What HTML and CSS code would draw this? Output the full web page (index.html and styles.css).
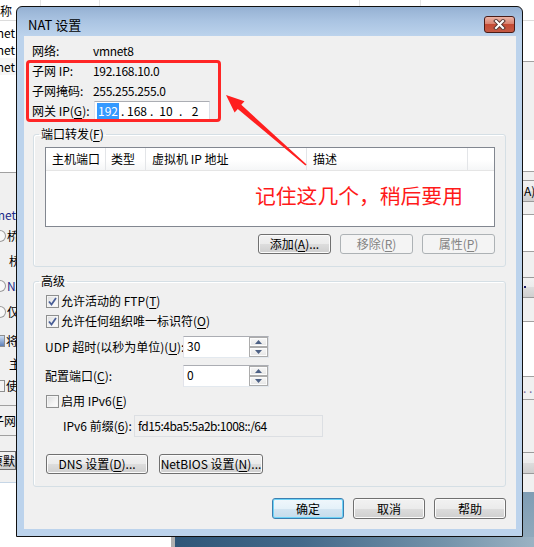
FILE: index.html
```html
<!DOCTYPE html>
<html lang="zh-CN">
<head>
<meta charset="utf-8">
<title>NAT 设置</title>
<link rel="stylesheet" href="styles.css">
</head>
<body>
<div class="desktop">
  <div class="bg-header">
    <span class="bh-cell bh-c1">称</span>
    <span class="bh-cell bh-c2"></span>
    <span class="bh-cell bh-c3"></span>
    <span class="bh-cell bh-c4"></span>
    <span class="bh-cell bh-c5"></span>
  </div>
  <div class="bg-main">
    <div class="bg-left">
      <div class="l-list">
        <div class="l-item">vmnet</div>
        <div class="l-item">vmnet</div>
        <div class="l-item l-item-sel">vmnet</div>
      </div>
      <div class="l-panel">
        <div class="l-row l-h32"></div>
        <div class="l-row l-h20 l-end l-blue">Vmnet</div>
        <div class="l-row l-h22"><span class="l-radio"></span><span>桥</span></div>
        <div class="l-row l-h28 l-ind">桥</div>
        <div class="l-row l-h22"><span class="l-radio"></span><span class="l-blue">NAT</span></div>
        <div class="l-row l-h30"><span class="l-radio"></span><span>仅</span></div>
        <div class="l-row l-h28"><span class="l-check"></span><span>将</span></div>
        <div class="l-row l-h18 l-ind">主</div>
        <div class="l-row l-h26"><span class="l-check l-check-off"></span><span>使</span></div>
        <div class="l-row l-h7 l-line"></div>
        <div class="l-row l-h30 l-line l-end">子网</div>
        <div class="l-row l-h13"></div>
        <div class="l-row l-h23"><span class="l-btn">还原默</span></div>
        <div class="l-row l-h10"></div>
      </div>
      <div class="l-white"></div>
    </div>
    <div class="bg-right">
      <div class="r-blk r-h41 r-white r-line"></div>
      <div class="r-blk r-h78 r-gray"></div>
      <div class="r-blk r-h32 r-white r-line"></div>
      <div class="r-blk r-h8 r-gray"></div>
      <div class="r-blk r-h22 r-btn">A)...</div>
      <div class="r-blk r-h13 r-gray r-line"></div>
      <div class="r-blk r-h37 r-white r-line"></div>
      <div class="r-blk r-h25 r-gray"></div>
      <div class="r-blk r-h21 r-btn"><span class="r-dot"></span></div>
      <div class="r-blk r-h24 r-gray r-line"></div>
      <div class="r-blk r-h55 r-white r-line"></div>
      <div class="r-blk r-h23 r-gray r-line r-dots">. .</div>
      <div class="r-blk r-h52 r-gray"></div>
      <div class="r-blk r-h22 r-btn"></div>
      <div class="r-blk r-h18 r-gray"></div>
      <div class="r-blk r-desk"></div>
    </div>
  </div>
  <div class="bg-bottom">
    <div class="bb-white"></div>
    <div class="bb-desk"></div>
  </div>
</div>

<div class="dialog">
  <div class="titlebar">
    <span class="title">NAT 设置</span>
    <span class="close">
      <svg width="13" height="11" viewBox="0 0 13 11">
        <path d="M3 2 L10 9 M10 2 L3 9" stroke="#5b3a36" stroke-width="4" stroke-linecap="square" fill="none"/>
        <path d="M3 2 L10 9 M10 2 L3 9" stroke="#ffffff" stroke-width="2" stroke-linecap="square" fill="none"/>
      </svg>
    </span>
  </div>
  <div class="client">
    <div class="info">
      <span class="lbl">网络:</span><span class="val">vmnet8</span>
      <span class="lbl">子网 IP:</span><span class="val">192.168.10.0</span>
      <span class="lbl">子网掩码:</span><span class="val">255.255.255.0</span>
      <span class="lbl">网关 IP(<u>G</u>):</span>
      <div class="ipbox">
        <span class="ipf"><span class="sel">192</span></span><span class="ipdot">.</span>
        <span class="ipf">168</span><span class="ipdot">.</span>
        <span class="ipf">10</span><span class="ipdot">.</span>
        <span class="ipf">2</span>
      </div>
      <div class="redbox"></div>
    </div>

    <fieldset class="group g1">
      <legend>端口转发(<u>F</u>)</legend>
      <div class="listview">
        <div class="lv-head">
          <span class="lv-col lv-c1">主机端口</span>
          <span class="lv-col lv-c2">类型</span>
          <span class="lv-col lv-c3">虚拟机 IP 地址</span>
          <span class="lv-col lv-c4">描述</span>
          <span class="lv-col lv-c5"></span>
        </div>
        <div class="note">记住这几个，稍后要用</div>
      </div>
      <div class="btnrow">
        <button class="btn btn-73">添加(<u>A</u>)...</button>
        <button class="btn btn-73" disabled>移除(<u>R</u>)</button>
        <button class="btn btn-73" disabled>属性(<u>P</u>)</button>
      </div>
    </fieldset>

    <fieldset class="group g2">
      <legend>高级</legend>
      <div class="cb-row cb-first">
        <span class="cb"><svg width="11" height="11" viewBox="0 0 11 11"><path d="M2 5.5 L4.5 8.5 L9 2" stroke="#4a5f97" stroke-width="1.8" fill="none"/></svg></span>
        <span>允许活动的 FTP(<u>T</u>)</span>
      </div>
      <div class="cb-row">
        <span class="cb"><svg width="11" height="11" viewBox="0 0 11 11"><path d="M2 5.5 L4.5 8.5 L9 2" stroke="#4a5f97" stroke-width="1.8" fill="none"/></svg></span>
        <span>允许任何组织唯一标识符(<u>O</u>)</span>
      </div>
      <div class="field-row udp-row">
        <span class="field-lbl">UDP 超时(以秒为单位)(<u>U</u>):</span>
        <div class="spin">
          <span class="spin-text">30</span>
          <span class="spin-btns">
            <span class="spin-btn"><svg width="7" height="4" viewBox="0 0 7 4"><path d="M0 4 L3.5 0 L7 4 Z" fill="#4d6185"/></svg></span>
            <span class="spin-btn"><svg width="7" height="4" viewBox="0 0 7 4"><path d="M0 0 L3.5 4 L7 0 Z" fill="#4d6185"/></svg></span>
          </span>
        </div>
      </div>
      <div class="field-row port-row">
        <span class="field-lbl">配置端口(<u>C</u>):</span>
        <div class="spin">
          <span class="spin-text">0</span>
          <span class="spin-btns">
            <span class="spin-btn"><svg width="7" height="4" viewBox="0 0 7 4"><path d="M0 4 L3.5 0 L7 4 Z" fill="#4d6185"/></svg></span>
            <span class="spin-btn"><svg width="7" height="4" viewBox="0 0 7 4"><path d="M0 0 L3.5 4 L7 0 Z" fill="#4d6185"/></svg></span>
          </span>
        </div>
      </div>
      <div class="cb-row cb-ipv6">
        <span class="cb"></span>
        <span>启用 IPv6(<u>E</u>)</span>
      </div>
      <div class="field-row ipv6-row">
        <span class="ipv6-lbl">IPv6 前缀(<u>6</u>):</span>
        <div class="ro-box">fd15:4ba5:5a2b:1008::/64</div>
      </div>
      <div class="btnrow2">
        <button class="btn btn-dns">DNS 设置(<u>D</u>)...</button>
        <button class="btn btn-netbios">NetBIOS 设置(<u>N</u>)...</button>
      </div>
    </fieldset>

    <div class="dlg-buttons">
      <button class="btn btn-72 btn-default">确定</button>
      <button class="btn btn-72">取消</button>
      <button class="btn btn-72">帮助</button>
    </div>
  </div>
</div>

<svg class="arrow" width="92" height="80" viewBox="0 0 92 80">
  <polygon points="6,5 24.5,11.2 21.3,14.8 86.6,74.4 85.4,75.6 17.8,19.0 14.6,22.6" fill="#ff1f1f"/>
</svg>
</body>
</html>
```

FILE: styles.css
```css
* { box-sizing: border-box; }
html, body { margin: 0; padding: 0; }
body {
  width: 534px;
  height: 547px;
  overflow: hidden;
  position: relative;
  font-family: "Noto Sans CJK SC", "Noto Sans", sans-serif;
  font-size: 12px;
  line-height: 16px;
  color: #000;
  background: #fff;
}
u { text-decoration-thickness: 1px; text-underline-offset: 2px; }

/* ---------- background window ---------- */
.desktop { display: flex; flex-direction: column; height: 547px; }
.bg-header {
  height: 21px;
  display: flex;
  background: #fff;
  border-bottom: 1px solid #dcdcdc;
  flex: none;
}
.bh-cell { height: 20px; border-right: 1px solid #e5e5e5; line-height: 22px; font-size: 12px; }
.bh-c1 { width: 41px; }
.bh-c2 { width: 59px; }
.bh-c3 { width: 260px; }
.bh-c4 { width: 61px; }
.bh-c5 { flex: 1; border-right: none; }

.bg-main { flex: 1; display: flex; justify-content: space-between; min-height: 0; }
.bg-left { width: 16px; display: flex; flex-direction: column; overflow: hidden; white-space: nowrap; }
.l-list { height: 152px; background: #fff; padding-top: 3px; border-bottom: 1px solid #a0a0a0; flex: none; }
.l-item { height: 17px; line-height: 17px; display: flex; justify-content: flex-end; padding-right: 1px; }
.l-item-sel { background: #f6f6f6; }
.l-panel { background: #f0f0f0; flex: none; border-bottom: 1px solid #c6d6e6; }
.l-row { display: flex; align-items: center; gap: 1px; overflow: hidden; }
.l-end { justify-content: flex-end; }
.l-ind { padding-left: 9px; }
.l-blue { color: #1a2a8a; }
.l-h7 { height: 7px; }
.l-h10 { height: 10px; }
.l-h13 { height: 13px; }
.l-h18 { height: 18px; }
.l-h20 { height: 20px; }
.l-h22 { height: 22px; }
.l-h23 { height: 23px; }
.l-h26 { height: 26px; }
.l-h28 { height: 28px; }
.l-h30 { height: 30px; }
.l-h32 { height: 32px; }
.l-line { border-bottom: 1px solid #a0a0a0; }
.l-radio {
  flex: none; width: 6px; height: 12px;
  border: 1px solid #9a9a9a; border-left: none;
  border-radius: 0 6px 6px 0;
  background: #f8f8f8;
}
.l-check {
  flex: none; width: 5px; height: 12px;
  border: 1px solid #8e8f8f; border-left: none;
  background: linear-gradient(#cfe0f5, #5d7fb7);
}
.l-check-off { background: #f4f4f4; }
.l-btn {
  display: flex; justify-content: flex-end;
  width: 16px; height: 19px; line-height: 17px;
  border: 1px solid #707070; border-left: none;
  background: linear-gradient(#f2f2f2, #ebebeb 50%, #dddddd 50%, #cfcfcf);
  overflow: hidden;
}
.l-white { flex: 1; background: #fff; }

.bg-right { width: 11px; display: flex; flex-direction: column; overflow: hidden; white-space: nowrap; font-size: 12px; }
.r-blk { flex: none; }
.r-h8 { height: 8px; }
.r-h13 { height: 13px; }
.r-h18 { height: 18px; }
.r-h21 { height: 21px; }
.r-h22 { height: 22px; }
.r-h23 { height: 23px; }
.r-h24 { height: 24px; }
.r-h25 { height: 25px; }
.r-h32 { height: 32px; }
.r-h37 { height: 37px; }
.r-h41 { height: 41px; }
.r-h52 { height: 52px; }
.r-h55 { height: 55px; }
.r-h78 { height: 78px; }
.r-white { background: #fff; }
.r-gray { background: #f0f0f0; }
.r-line { border-bottom: 1px solid #a0a0a0; }
.r-btn {
  background: linear-gradient(#f2f2f2, #ebebeb 50%, #dddddd 50%, #cfcfcf);
  border-top: 1px solid #9a9a9a; border-bottom: 1px solid #9a9a9a;
  line-height: 19px; padding-left: 1px;
}
.r-dot { display: inline-block; width: 2px; height: 2px; background: #1a1a6a; margin-top: 8px; vertical-align: top; }
.r-dots { line-height: 22px; color: #7a6a9a; }
.r-desk { flex: 1; background: linear-gradient(#7f9db4, #8fa9bc); }

.bg-bottom { height: 10px; display: flex; flex: none; }
.bb-white { width: 175px; background: #fff; border-right: 4px solid #b0b0b0; }
.bb-desk { flex: 1; background: linear-gradient(90deg, #2f5678 0%, #44698a 35%, #7493aa 75%, #9bb2c3 100%); }

/* ---------- dialog ---------- */
.dialog {
  position: absolute;
  left: 16px;
  top: 6px;
  width: 507px;
  height: 531px;
  border: 1px solid #111;
  border-radius: 6px 6px 0 0;
  background: linear-gradient(#95b1d3 0px, #aac4e2 14px, #bcd3ec 29px, #bcd3ec 100%);
  display: flex;
  flex-direction: column;
}
.titlebar {
  height: 29px;
  flex: none;
  display: flex;
  justify-content: space-between;
  align-items: center;
  padding: 6px 7px 0 11px;
}
.title { font-size: 13px; line-height: 17px; }
.close {
  width: 31px;
  height: 17px;
  border: 1px solid #4a1c17;
  border-radius: 3px;
  background: linear-gradient(#ecb4a6 0%, #d98371 45%, #c44a34 50%, #c55a44 100%);
  display: flex;
  align-items: center;
  justify-content: center;
}
.client {
  flex: none;
  height: 493px;
  margin: 0 6px 0 7px;
  background: #f0f0f0;
  display: flex;
  flex-direction: column;
}

/* info block */
.info {
  position: relative;
  display: grid;
  grid-template-columns: 61px max-content;
  grid-auto-rows: 20px;
  align-items: center;
  justify-content: start;
  margin: 5px 0 0 8px;
}
.lbl, .val { white-space: nowrap; }
.val { letter-spacing: -0.3px; }
.ipbox {
  margin-left: 1px;
  width: 116px;
  height: 20px;
  background: #fff;
  border: 1px solid;
  border-color: #abadb3 #dbdfe6 #e3e9ef #e2e3ea;
  display: flex;
  align-items: center;
}
.ipf { width: 26px; text-align: center; line-height: 16px; }
.ipdot { width: 3px; text-align: center; }
.sel { background: #3399ff; color: #fff; padding: 0 1px; display: inline-block; }
.redbox {
  position: absolute;
  left: -6px;
  top: 19px;
  width: 195px;
  height: 62px;
  border: 3px solid #ff2626;
  border-radius: 4px;
}

/* group boxes */
.group {
  margin: 0 10px 0 9px;
  border: 1px solid #d5dfe5;
  border-radius: 3px;
  min-width: 0;
  box-shadow: inset 1px 1px 0 #fff;
}
.group legend {
  margin-left: -6px;
  padding: 0 2px;
  line-height: 16px;
  font-size: 12px;
}
.g1 { margin-top: 5px; padding: 5px 10px 12px 11px; }
.g2 { margin-top: 6px; padding: 0 10px 12px 11px; }

.listview {
  position: relative;
  height: 80px;
  border: 1px solid #828790;
  background: #fff;
}
.lv-head {
  display: flex;
  height: 23px;
  background: linear-gradient(#ffffff, #ffffff 55%, #f5f6f7 100%);
  border-bottom: 1px solid #e5e5e5;
}
.lv-col { border-right: 1px solid #e3e5e8; line-height: 22px; padding-left: 6px; white-space: nowrap; }
.lv-c1 { width: 60px; }
.lv-c2 { width: 40px; padding-left: 5px; }
.lv-c3 { width: 161px; }
.lv-c4 { width: 161px; }
.lv-c5 { flex: 1; border-right: none; }
.note {
  position: absolute;
  left: 209px;
  top: 33px;
  font-size: 20.8px;
  line-height: 28px;
  color: #ff1a1a;
  white-space: nowrap;
}

.btn {
  font: inherit;
  color: #000;
  height: 20px;
  padding: 0;
  border: 1px solid #707070;
  border-radius: 3px;
  background: linear-gradient(#f2f2f2 0%, #ebebeb 50%, #dddddd 50%, #cfcfcf 100%);
  box-shadow: inset 0 0 0 1px #fbfbfb;
  line-height: 16px;
  text-align: center;
  white-space: nowrap;
}
.btn:disabled {
  color: #838383;
  border-color: #adb2b5;
  background: #f4f4f4;
  box-shadow: none;
}
.btn-73 { width: 73px; }
.btn-72 { width: 72px; height: 21px; }
.btn-dns { width: 102px; margin-left: 1px; }
.btn-netbios { width: 104px; }
.btn-default {
  border-color: #3c7fb1;
  box-shadow: inset 0 0 0 1px #6dd3f7;
  background: linear-gradient(#f0f7fc 0%, #e5f1f9 50%, #d3e5f2 50%, #c6dceb 100%);
}
.btnrow { display: flex; justify-content: flex-end; gap: 9px; margin-top: 7px; }
.btnrow2 { display: flex; gap: 11px; margin-top: 17px; }

.cb-row { display: flex; align-items: center; height: 20px; gap: 2px; white-space: nowrap; }
.cb-first { margin-top: 2px; }
.cb-ipv6 { margin-top: 4px; }
.cb {
  flex: none;
  width: 13px;
  height: 13px;
  margin-left: 1px;
  border: 1px solid #8e8f8f;
  background: linear-gradient(135deg, #dadbdc 0%, #f4f4f4 60%, #fdfdfd 100%);
  box-shadow: inset 0 0 0 1px #f4f4f4;
  display: flex;
  align-items: center;
  justify-content: center;
}

.field-row { display: flex; align-items: center; white-space: nowrap; }
.udp-row { margin-top: 5px; }
.port-row { margin-top: 7px; }
.ipv6-row { margin-top: 4px; }
.field-lbl { width: 138px; }
.spin {
  width: 86px;
  height: 22px;
  background: #fff;
  border: 1px solid;
  border-color: #abadb3 #dbdfe6 #e3e9ef #e2e3ea;
  display: flex;
}
.spin-text { flex: 1; padding: 1px 0 0 3px; line-height: 16px; }
.spin-btns { width: 19px; display: flex; flex-direction: column; }
.spin-btn {
  flex: 1;
  border: 1px solid #acacac;
  box-shadow: inset 0 0 0 1px #fcfcfc;
  background: linear-gradient(#f7f7f7, #e6e6e6);
  display: flex;
  align-items: center;
  justify-content: center;
}
.ipv6-lbl { width: 89px; padding-left: 18px; }
.ro-box {
  width: 189px;
  height: 22px;
  border: 1px solid #dcdfe3;
  background: #f0f0f0;
  padding: 2px 0 0 3px;
  line-height: 16px;
  letter-spacing: -0.5px;
}

.dlg-buttons { display: flex; justify-content: flex-end; gap: 9px; margin: 11px 10px 0 0; }

.arrow { position: absolute; left: 220px; top: 90px; }
```
